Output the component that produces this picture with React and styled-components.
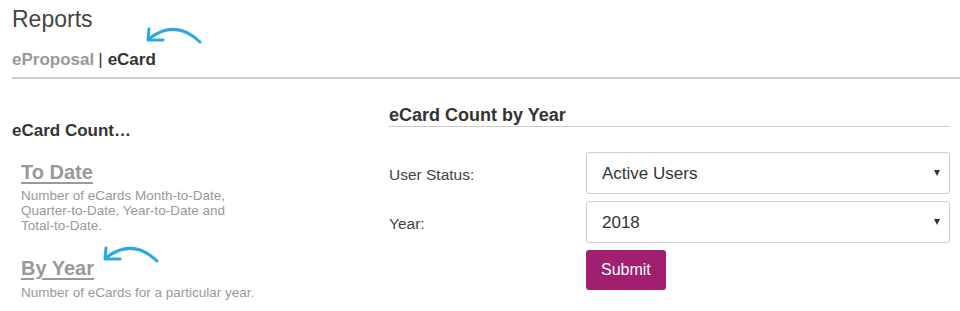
import React from "react";
import styled, { createGlobalStyle } from "styled-components";

const FONT = `"Liberation Sans", Arial, Helvetica, sans-serif`;

const GlobalStyle = createGlobalStyle`
  body {
    margin: 0;
    background: #fff;
    font-family: ${FONT};
  }
`;

const Page = styled.div`
  width: 960px;
  height: 311px;
  overflow: hidden;
  padding-left: 12px;
  box-sizing: border-box;
`;

const Header = styled.div`
  position: relative;
  border-bottom: 2px solid #cccccc;
  padding-bottom: 7px;
`;

const Title = styled.h1`
  margin: 0;
  padding-top: 5px;
  font-size: 23px;
  line-height: 28px;
  font-weight: normal;
  color: #444444;
`;

const Tabs = styled.div`
  margin-top: 17px;
  font-size: 17px;
  line-height: 20px;
  font-weight: bold;
  color: #333333;
`;

const Tab = styled.span`
  color: ${(p) => (p.$active ? "#333333" : "#999999")};
`;

const Divider = styled.span`
  font-weight: normal;
  color: #333333;
  margin: 0 5px 0 4px;
`;

const ArrowSvg = styled.svg`
  position: absolute;
  left: ${(p) => p.$left}px;
  top: ${(p) => p.$top}px;
`;

const Content = styled.div`
  display: grid;
  grid-template-columns: 377px 1fr;
  padding-right: 10px;
`;

const LeftCol = styled.div`
  padding-top: 42px;
`;

const SideHeading = styled.div`
  font-size: 17px;
  line-height: 20px;
  font-weight: bold;
  color: #333333;
`;

const ReportItem = styled.div`
  position: relative;
  padding-left: 9px;
  margin-top: ${(p) => p.$gap}px;
`;

const ReportLink = styled.a`
  display: inline-block;
  font-size: 20px;
  line-height: 24px;
  font-weight: bold;
  color: #999999;
  text-decoration: underline;
  text-decoration-thickness: 2px;
  text-underline-offset: 3px;
`;

const ReportDesc = styled.div`
  margin-top: ${(p) => p.$gap}px;
  width: 235px;
  font-size: 13.5px;
  line-height: 15px;
  color: #999999;
`;

const RightCol = styled.div`
  padding-top: 25px;
`;

const FormHeading = styled.div`
  font-size: 18px;
  line-height: 22px;
  font-weight: bold;
  color: #333333;
  border-bottom: 1px solid #cccccc;
`;

const Form = styled.div`
  margin-top: 25px;
  display: grid;
  grid-template-columns: 197px 1fr;
  row-gap: 7px;
  align-items: center;
`;

const Label = styled.label`
  padding-top: 4px;
  font-size: 15.5px;
  color: #444444;
`;

const SelectWrap = styled.div`
  position: relative;
  &::after {
    content: "";
    position: absolute;
    right: 10px;
    top: 18px;
    border-left: 3.5px solid transparent;
    border-right: 3.5px solid transparent;
    border-top: 6px solid #333333;
    pointer-events: none;
  }
`;

const Select = styled.select`
  display: block;
  width: 100%;
  height: 42px;
  box-sizing: border-box;
  padding: 0 30px 0 15px;
  border: 1px solid #cccccc;
  border-radius: 3px;
  background: #ffffff;
  appearance: none;
  font-family: ${FONT};
  font-size: 17px;
  color: #333333;
`;

const SubmitButton = styled.button`
  grid-column: 2;
  justify-self: start;
  height: 40px;
  padding: 0 15px;
  border: none;
  border-radius: 3px;
  background: #a01f6e;
  color: #ffffff;
  font-family: ${FONT};
  font-size: 16px;
`;

function Arrow({ left, top }) {
  return (
    <ArrowSvg $left={left} $top={top} width="58" height="22" viewBox="0 0 58 22">
      <g fill="none" stroke="#29a9e1" strokeWidth="3" strokeLinecap="round" strokeLinejoin="round">
        <path d="M4 13 Q 30 -6 54 17" />
        <path d="M3 4 L2 15 L17 15" />
      </g>
    </ArrowSvg>
  );
}

export default function App() {
  return (
    <>
      <GlobalStyle />
      <Page>
        <Header>
          <Title>Reports</Title>
          <Arrow left={134} top={25} />
          <Tabs>
            <Tab>eProposal</Tab>
            <Divider>|</Divider>
            <Tab $active>eCard</Tab>
          </Tabs>
        </Header>
        <Content>
          <LeftCol>
            <SideHeading>eCard Count…</SideHeading>
            <ReportItem $gap={19}>
              <ReportLink>To Date</ReportLink>
              <ReportDesc $gap={4}>
                Number of eCards Month-to-Date, Quarter-to-Date, Year-to-Date and Total-to-Date.
              </ReportDesc>
            </ReportItem>
            <ReportItem $gap={23}>
              <ReportLink>By Year</ReportLink>
              <Arrow left={91} top={-12} />
              <ReportDesc $gap={5}>Number of eCards for a particular year.</ReportDesc>
            </ReportItem>
          </LeftCol>
          <RightCol>
            <FormHeading>eCard Count by Year</FormHeading>
            <Form>
              <Label>User Status:</Label>
              <SelectWrap>
                <Select defaultValue="active">
                  <option value="active">Active Users</option>
                  <option value="inactive">Inactive Users</option>
                </Select>
              </SelectWrap>
              <Label>Year:</Label>
              <SelectWrap>
                <Select defaultValue="2018">
                  <option value="2018">2018</option>
                  <option value="2017">2017</option>
                </Select>
              </SelectWrap>
              <SubmitButton>Submit</SubmitButton>
            </Form>
          </RightCol>
        </Content>
      </Page>
    </>
  );
}
